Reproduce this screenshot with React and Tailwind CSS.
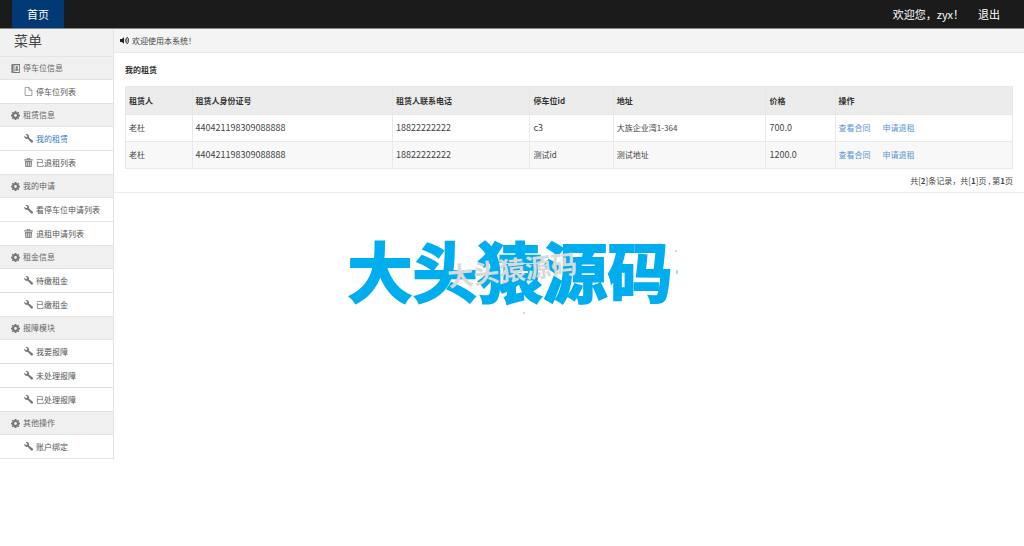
import React from "react";
import { FaVolumeUp } from "react-icons/fa";

function FileIcon() {
  return (
    <svg viewBox="0 0 16 16" className="size-[9px] text-[#888]" fill="none" stroke="currentColor" strokeWidth="1.4" aria-hidden="true">
      <path d="M2 .8h7l5 5v9.400h-12z M9 .8v5h5" />
    </svg>
  );
}

function TrashIcon() {
  return (
    <svg viewBox="0 0 16 16" className="size-[9px] text-[#888]" aria-hidden="true">
      <path fill="currentColor" fillRule="evenodd" d="M5 0h6v2h4.500v2.600H.5V2H5z M6.400 1.200V2h3.200v-.8z M1.500 5.400h13L13.500 16h-11z M4.300 7.500l.3 6.500h1V7.500z M7.500 7.500V14h1V7.500z M10.400 7.500V14h1l.3-6.500z" />
    </svg>
  );
}

function BookIcon() {
  return (
    <svg viewBox="0 0 16 16" className="size-[9px] text-[#777]" aria-hidden="true">
      <path fill="currentColor" fillRule="evenodd" d="M1 0h15v16H1v-2.500H0v-1.500h1V9H0V7.500h1V4.500H0V3h1z M6 2v12h8.500V2z" />
      <path fill="currentColor" d="M8.500 4h3.500v4H8.500z M7.500 8.500h5.500v3.500H7.500z" />
      <path fill="#f0f0f0" d="M3.500 1.500h.8v13h-.8z" />
    </svg>
  );
}

function WrenchIcon() {
  return (
    <svg viewBox="0 0 16 16" className="size-[9px] text-[#777]" aria-hidden="true">
      <path fill="currentColor" d="M2.600.6C4.800-.4 7.300.2 8.400 2c.8 1.400.8 2.700.4 4l6.500 5.700c1 .9 1 2.200.2 3.100-.9 1-2.300.9-3.200-.1L6.500 8.500C4.900 9 3.300 8.800 2 7.700.5 6.500 0 4.600.6 2.900l2.700 2.600 2.200-.5.500-2z" />
    </svg>
  );
}

function GearIcon() {
  return (
    <svg viewBox="0 0 16 16" className="size-[9px] text-[#777]" aria-hidden="true">
      <path
        fill="currentColor"
        fillRule="evenodd"
        d="M6.500 0h3l.5 2.200 1 .4L13 1.400 14.600 3l-1.200 2 .4 1 2.200.5v3l-2.200.5-.4 1 1.200 2-1.600 1.600-2-1.200-1 .4-.5 2.200h-3L6 13.800l-1-.4-2 1.200L1.400 13l1.200-2-.4-1L0 9.500v-3L2.200 6l.4-1-1.200-2L3 1.400l2 1.200 1-.4z M8 5.500a2.500 2.500 0 1 0 0 5 2.500 2.500 0 0 0 0-5z"
      />
    </svg>
  );
}

const menu = [
  { title: "停车位信息", Icon: BookIcon, items: [["停车位列表", FileIcon]] },
  { title: "租赁信息", Icon: GearIcon, items: [["我的租赁", WrenchIcon, true], ["已退租列表", TrashIcon]] },
  { title: "我的申请", Icon: GearIcon, items: [["看停车位申请列表", WrenchIcon], ["退租申请列表", TrashIcon]] },
  { title: "租金信息", Icon: GearIcon, items: [["待缴租金", WrenchIcon], ["已缴租金", WrenchIcon]] },
  { title: "报障模块", Icon: GearIcon, items: [["我要报障", WrenchIcon], ["未处理报障", WrenchIcon], ["已处理报障", WrenchIcon]] },
  { title: "其他操作", Icon: GearIcon, items: [["账户绑定", WrenchIcon]] },
];

const columns = [
  ["租赁人", "w-[7.5%]"],
  ["租赁人身份证号", "w-[22.6%]"],
  ["租赁人联系电话", "w-[15.5%]"],
  ["停车位id", "w-[9.4%]"],
  ["地址", "w-[17.2%]"],
  ["价格", "w-[7.8%]"],
  ["操作", "w-[20%]"],
];

const rows = [
  ["老杜", "440421198309088888", "18822222222", "c3", "大族企业湾1-364", "700.0"],
  ["老杜", "440421198309088888", "18822222222", "测试id", "测试地址", "1200.0"],
];

export default function App() {
  return (
    <div className="relative min-h-screen bg-white font-['Noto_Sans_CJK_SC','Noto_Sans',sans-serif] text-[8px] text-[#444]">
      <header className="flex h-[29px] items-stretch justify-between border-b border-[#888] bg-[#1b1b1b] text-[11px] text-white">
        <a href="#" className="ml-3 flex items-center bg-[#003973] px-[15px]">首页</a>
        <div className="flex items-center gap-3.5 pr-6">
          <span>欢迎您，zyx！</span>
          <a href="#">退出</a>
        </div>
      </header>

      <div className="flex items-start">
        <nav className="w-[114px] shrink-0 border-r border-[#e3e3e3]">
          <h1 className="flex h-7 items-center border-b border-[#e5e5e5] bg-[#f1f1f1] pb-1 pl-3.5 text-[14px]">菜单</h1>
          {menu.map(({ title, Icon, items }) => (
            <section key={title}>
              <h2 className="flex h-[23px] items-center gap-[3px] border-b border-[#e3e3e3] bg-[#f0f0f0] pl-[11px] text-[#666]">
                <Icon />
                {title}
              </h2>
              <ul>
                {items.map(([label, ItemIcon, active]) => (
                  <li key={label} className="border-b border-[#e3e3e3]">
                    <a href="#" className={`flex h-[23px] items-center gap-[3px] pl-6 ${active ? "text-[#3a77bd]" : "text-[#555]"}`}>
                      <ItemIcon />
                      {label}
                    </a>
                  </li>
                ))}
              </ul>
            </section>
          ))}
        </nav>

        <main className="min-w-0 grow">
          <div className="flex h-6 items-center gap-[3px] border-b border-[#e8e8e8] bg-[#f4f4f4] pl-1.5">
            <FaVolumeUp className="size-[9px] text-[#222]" aria-hidden="true" />
            欢迎使用本系统！
          </div>
          <div className="border-b border-[#ececec] px-[11px]">
            <h2 className="flex h-[33px] items-center font-bold text-[#333]">我的租赁</h2>
            <table className="w-full table-fixed border-collapse text-left">
              <thead>
                <tr className="h-7 bg-[#ececec] text-[#333]">
                  {columns.map(([name, width]) => (
                    <th key={name} className={`${width} border border-[#e7e7e7] px-[3px] font-bold`}>{name}</th>
                  ))}
                </tr>
              </thead>
              <tbody>
                {rows.map((row, r) => (
                  <tr key={r} className="h-[27px] even:bg-[#f8f8f8]">
                    {row.map((cell, c) => (
                      <td key={c} className={`border border-[#e9e9e9] px-[3px] ${/^[\w.]+$/.test(cell) ? "text-[9px]" : ""}`}>{cell}</td>
                    ))}
                    <td className="border border-[#e9e9e9] px-[3px]">
                      <div className="flex gap-3 text-[#5795d0]">
                        <a href="#">查看合同</a>
                        <a href="#">申请退租</a>
                      </div>
                    </td>
                  </tr>
                ))}
              </tbody>
            </table>
            <p className="flex h-[23px] items-center justify-end">
              <span>
                共[<b>2</b>]条记录，共[<b>1</b>]页 , 第<b>1</b>页
              </span>
            </p>
          </div>
        </main>
      </div>

      <div className="pointer-events-none absolute inset-x-0 top-[236px] flex h-[66px] items-center justify-center pr-1">
        <span className="text-[65px] leading-none font-bold whitespace-nowrap text-[#00aeef] [-webkit-text-stroke:2px_#00aeef] [stroke-linejoin:round]">大头猿源码</span>
      </div>
      <div className="pointer-events-none absolute inset-x-0 top-[240px] flex justify-center">
        <svg viewBox="0 0 340 80" className="h-20 w-[340px]" fill="#9adcf6" aria-hidden="true">
          <circle cx="182" cy="73" r="1" />
          <circle cx="334" cy="11" r="1" />
          <ellipse cx="335" cy="32" rx="1" ry="2.500" />
        </svg>
      </div>
      <div className="pointer-events-none absolute inset-x-0 top-[255px] flex h-7 items-center justify-center">
        <span className="-rotate-6 text-[26px] leading-none font-bold whitespace-nowrap text-[#d9d9d9]">大头猿源码</span>
      </div>
    </div>
  );
}
